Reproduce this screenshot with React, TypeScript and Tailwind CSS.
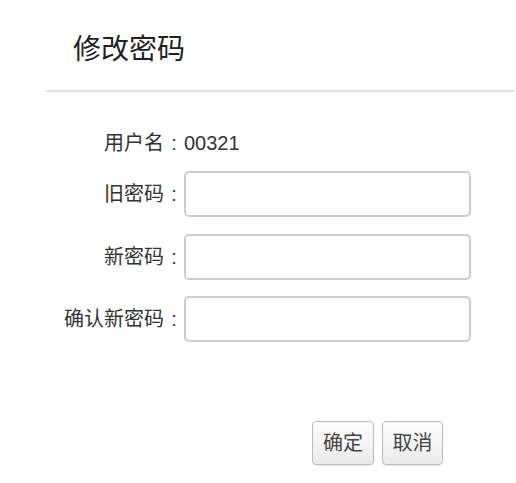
import React from "react";

function Colon() {
  return <span className="inline-block w-[20px] text-center">:</span>;
}

export default function App() {
  const rows = ["旧密码", "新密码", "确认新密码"];
  return (
    <div className="w-[516px] h-[483px] bg-white font-['Liberation_Sans','Noto_Sans_CJK_SC',sans-serif] text-[#333] overflow-hidden">
      <div className="pt-[36px] pl-[73px] text-[28px] leading-[28px] text-[#222]">修改密码</div>
      <div className="mt-[26px] ml-[45px] mr-[2px] h-[2px] bg-[#e2e2e2]" />
      <div className="mt-[41px] flex h-[20px] text-[20px] leading-[20px]">
        <div className="w-[184px] text-right">
          用户名
          <Colon />
        </div>
        <div>00321</div>
      </div>
      <div className="mt-[18px] flex flex-col gap-[16.5px]">
        {rows.map((r) => (
          <div key={r} className="flex items-center h-[46px]">
            <label className="w-[184px] text-right text-[20px] leading-[20px]">
              {r}
              <Colon />
            </label>
            <input
              type="password"
              className="w-[287px] h-[46px] border-2 border-[#cdcdcd] rounded-[5px] bg-white outline-none px-2"
            />
          </div>
        ))}
      </div>
      <div className="mt-[79px] flex pl-[312px] gap-[8px]">
        <button className="w-[62px] h-[44px] border border-[#bcbcbc] rounded-[4px] bg-gradient-to-b from-[#fdfdfd] to-[#ebebeb] text-[20px] leading-[20px] text-[#444] shadow-[0_1px_1px_rgba(0,0,0,0.08)]">
          确定
        </button>
        <button className="w-[61px] h-[44px] border border-[#bcbcbc] rounded-[4px] bg-gradient-to-b from-[#fdfdfd] to-[#ebebeb] text-[20px] leading-[20px] text-[#444] shadow-[0_1px_1px_rgba(0,0,0,0.08)]">
          取消
        </button>
      </div>
    </div>
  );
}
